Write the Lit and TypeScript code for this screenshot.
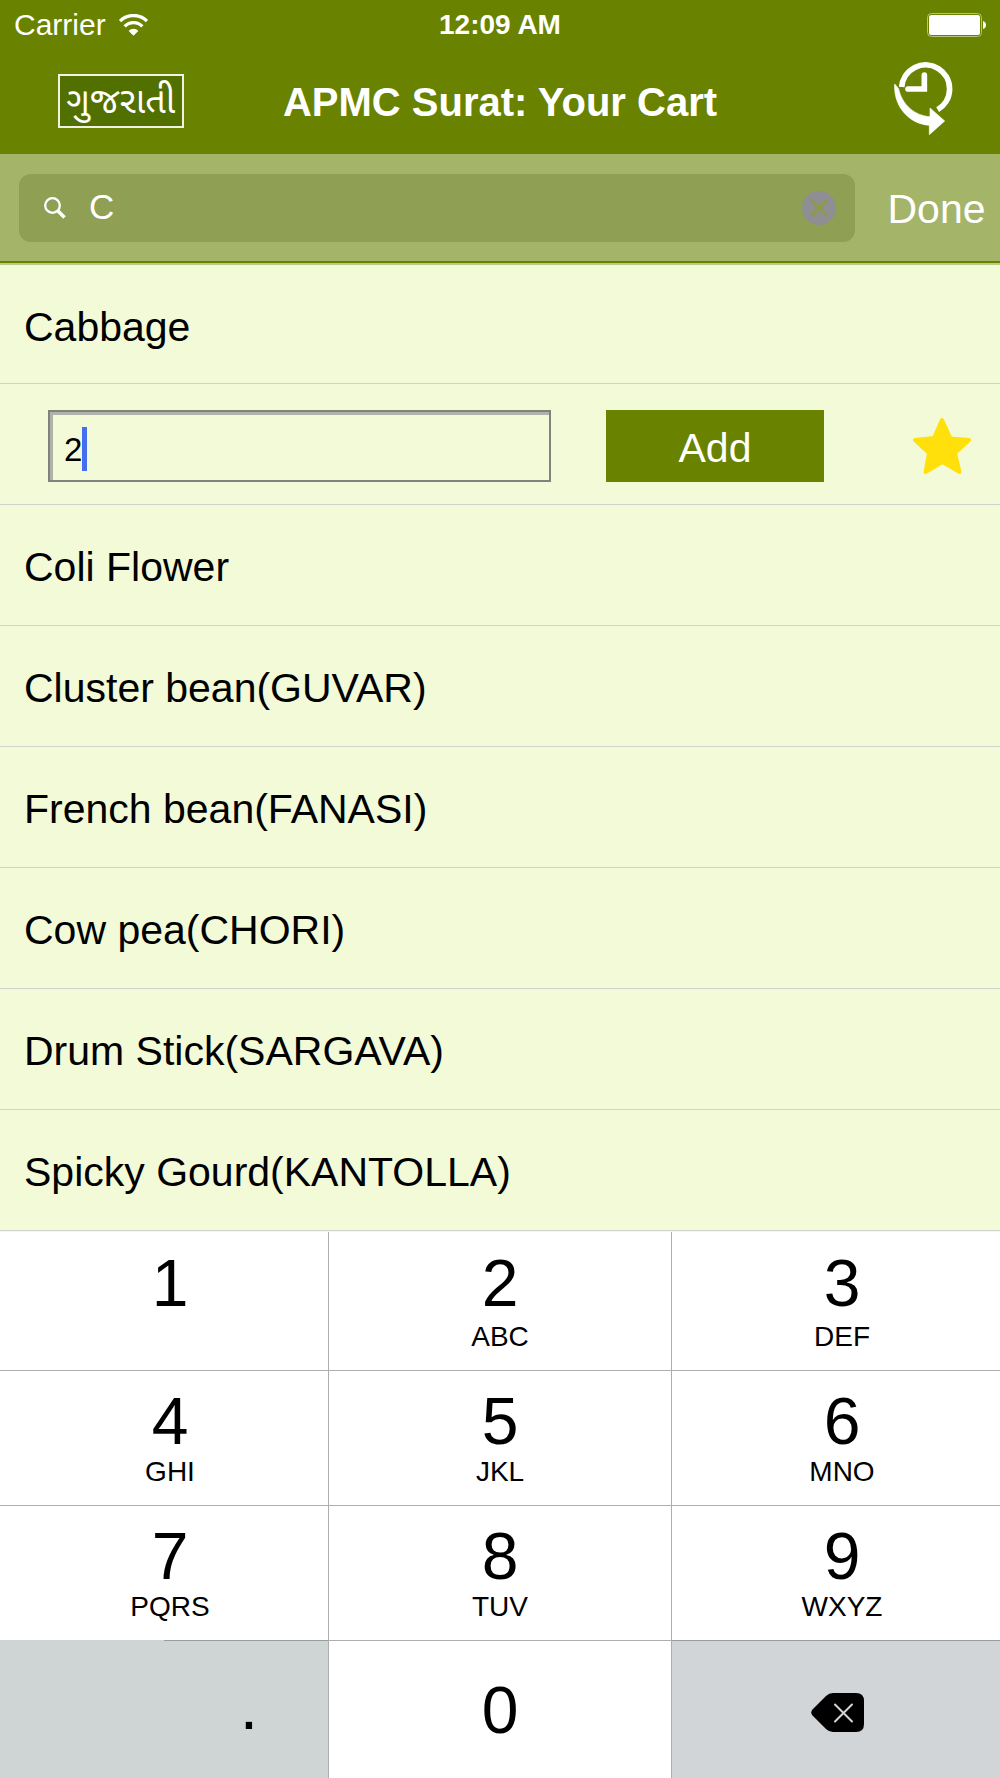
import { LitElement, html, css, svg, nothing } from "lit";
import { customElement, state, property } from "lit/decorators.js";

const wifiIcon = svg`
  <svg class="wifi" viewBox="0 0 87 66" aria-hidden="true">
    <g fill="none" stroke="#fff" stroke-width="10">
      <path d="M3 21 C26 -1 61 -1 84 21" />
      <path d="M17 37 C32 22 55 22 70 37" />
    </g>
    <path d="M29 51 C37 42 50 42 58 51 L43.500 65 Z" fill="#fff" />
  </svg>`;

const batteryIcon = svg`
  <svg class="battery" viewBox="0 0 59 24" aria-hidden="true">
    <rect x="0.500" y="0.500" width="54" height="23" rx="4" fill="none" stroke="#b4c480" />
    <rect x="2" y="2" width="51" height="20" rx="2.500" fill="#fff" />
    <path d="M56 8 Q59 9 59 12 Q59 15 56 16 Z" fill="#fff" />
  </svg>`;

const historyIcon = svg`
  <svg class="history-icon" viewBox="40 22 177 222" aria-hidden="true">
    <path d="M63 97 A72 72 0 1 1 171 165" fill="none" stroke="#fff" stroke-width="17" />
    <path d="M131 61 V103 H82" fill="none" stroke="#fff" stroke-width="17" stroke-linecap="round" />
    <path d="M42 88 C38 150 80 207 146 212 V240 L192 199 L148 160 V186 C105 184 64 152 54 102 Z" fill="#fff" stroke="#fff" stroke-width="2" />
  </svg>`;

const searchIcon = svg`
  <svg class="search-icon" viewBox="0 0 22 22" aria-hidden="true">
    <circle cx="8.500" cy="8.500" r="7.300" fill="none" stroke="#fff" stroke-width="2.300" />
    <path d="M13.500 13.500 L20.500 20.500" stroke="#fff" stroke-width="3.500" />
  </svg>`;

const clearIcon = svg`
  <svg class="clear-icon" viewBox="0 0 34 34" aria-hidden="true">
    <circle cx="17" cy="17" r="17" fill="#8e8e93" />
    <path d="M10.500 10.500 L23.500 23.500 M23.500 10.500 L10.500 23.500" stroke="#8c9a4c" stroke-width="3.400" stroke-linecap="round" />
  </svg>`;

const starIcon = svg`
  <svg class="star-icon" viewBox="0 0 58 56" aria-hidden="true">
    <path
      d="M29 2 L37.500 20.500 L56 22 L42 35 L46.500 54 L29.500 44 L12.500 54 L16 35 L2 22 L21 20 Z"
      fill="#ffe00a" stroke="#ffe00a" stroke-width="4" stroke-linejoin="round" />
  </svg>`;

const deleteIcon = svg`
  <svg class="delete-icon" viewBox="0 0 53 39" aria-hidden="true">
    <path d="M22 0 H45 Q53 0 53 8 V31 Q53 39 45 39 H22 Q18 39 15 36 L1.500 22.500 Q-1 19.500 1.500 16.500 L15 3 Q18 0 22 0 Z" />
    <path d="M24 11.500 L41 28.500 M41 11.500 L24 28.500" stroke="#d1d5d8" stroke-width="2" stroke-linecap="round" />
  </svg>`;

@customElement("key-pad")
class KeyPad extends LitElement {
  static styles = css`
    :host {
      display: block;
      background: #fff;
    }
    .pad {
      display: grid;
      grid-template-columns: 329fr 343fr 328fr;
      grid-template-rows: 138px 135px 135px 138px;
    }
    button {
      font: inherit;
      color: #000;
      margin: 0;
      border: 0;
      background: none;
    }
    .key {
      display: flex;
      flex-direction: column;
      align-items: center;
      justify-content: space-between;
      padding: 17px 0;
      border-right: 1px solid #adafaf;
      border-top: 1px solid #adafaf;
    }
    .top {
      border-top: 0;
      padding-top: 18px;
    }
    .side {
      padding-left: 12px;
    }
    .last {
      border-right: 0;
    }
    .digit {
      font-size: 66px;
      line-height: 66px;
    }
    .letters {
      font-size: 28px;
      line-height: 32px;
    }
    .solo {
      justify-content: center;
    }
    .split {
      display: grid;
      grid-template-columns: 1fr 1fr;
      background: #cfd5d5;
      border-right: 1px solid #adafaf;
    }
    .point {
      grid-column: 2;
      border-top: 1px solid #989d9d;
      font-size: 66px;
      line-height: 66px;
      padding: 0 0 8px 6px;
    }
    .delete {
      display: flex;
      align-items: center;
      justify-content: center;
      background: #d1d5d8;
      border-top: 1px solid #989d9d;
      padding: 5px 0 0 2px;
    }
    .delete-icon {
      display: block;
      width: 53px;
      height: 39px;
    }
  `;

  private keys: [string, string][] = [
    ["1", ""], ["2", "ABC"], ["3", "DEF"],
    ["4", "GHI"], ["5", "JKL"], ["6", "MNO"],
    ["7", "PQRS"], ["8", "TUV"], ["9", "WXYZ"],
  ];

  private press(value: string) {
    this.dispatchEvent(new CustomEvent("key-press", { detail: value }));
  }

  render() {
    return html`
      <div class="pad">
        ${this.keys.map(([digit, letters], i) => {
          const column = i % 3;
          const names = ["key", i < 3 ? "top" : "", column !== 1 ? "side" : "", column === 2 ? "last" : ""];
          return html`
            <button class=${names.filter(Boolean).join(" ")} @click=${() => this.press(digit)}>
              <span class="digit">${digit}</span>
              ${letters ? html`<span class="letters">${letters}</span>` : nothing}
            </button>`;
        })}
        <div class="split">
          <button class="point" @click=${() => this.press(".")}>.</button>
        </div>
        <button class="key solo" @click=${() => this.press("0")}><span class="digit">0</span></button>
        <button class="delete" aria-label="Delete" @click=${() => this.press("delete")}>${deleteIcon}</button>
      </div>`;
  }
}

@customElement("quantity-row")
class QuantityRow extends LitElement {
  @property() value = "";

  static styles = css`
    :host {
      display: flex;
      align-items: stretch;
      padding: 26px 0 22px 48px;
    }
    .field {
      position: relative;
      flex: 1;
      min-width: 0;
      display: flex;
    }
    .amount {
      flex: 1;
      min-width: 0;
      height: 72px;
      box-sizing: border-box;
      margin: 0;
      padding: 8px 14px 0;
      border: 2px solid #7f837c;
      border-radius: 0;
      box-shadow: inset 3px 3px 0 #b0b3ab;
      background: transparent;
      font: inherit;
      font-size: 33px;
      color: #000;
      outline: none;
    }
    .caret {
      position: absolute;
      left: 34px;
      top: 17px;
      width: 5px;
      height: 44px;
      background: #456df0;
    }
    button {
      font: inherit;
      border: 0;
      padding: 0;
    }
    .add {
      width: 218px;
      margin-left: 55px;
      background: #698200;
      color: #fff;
      font-size: 41px;
      line-height: 48px;
      padding-top: 4px;
    }
    .star {
      width: 117px;
      margin-left: 59px;
      background: none;
      display: flex;
      align-items: center;
      justify-content: center;
    }
    .star-icon {
      display: block;
      width: 58px;
      height: 56px;
    }
  `;

  render() {
    return html`
      <div class="field">
        <input class="amount" inputmode="decimal" aria-label="Quantity" .value=${this.value} />
        <span class="caret"></span>
      </div>
      <button class="add">Add</button>
      <button class="star" aria-label="Favourite">${starIcon}</button>`;
  }
}

@customElement("app-root")
class AppRoot extends LitElement {
  @state() private quantity = "2";
  @state() private query = "C";

  private items = [
    "Cabbage",
    "Coli Flower",
    "Cluster bean(GUVAR)",
    "French bean(FANASI)",
    "Cow pea(CHORI)",
    "Drum Stick(SARGAVA)",
    "Spicky Gourd(KANTOLLA)",
  ];

  static styles = css`
    :host {
      display: flex;
      flex-direction: column;
      min-height: 100vh;
      background: #f2fad8;
      font-family: "Liberation Sans", "Noto Sans Gujarati", Arial, sans-serif;
      color: #000;
    }
    .header {
      background: #698200;
      color: #fff;
    }
    .status {
      display: grid;
      grid-template-columns: 1fr auto 1fr;
      align-items: center;
      height: 48px;
      padding: 0 14px;
    }
    .carrier {
      display: flex;
      align-items: center;
      gap: 13px;
      font-size: 30px;
      line-height: 50px;
    }
    .wifi {
      width: 29px;
      height: 22px;
    }
    .time {
      font-size: 28px;
      line-height: 50px;
      font-weight: 700;
    }
    .battery {
      justify-self: end;
      width: 59px;
      height: 24px;
    }
    .nav {
      display: grid;
      grid-template-columns: 1fr auto 1fr;
      align-items: center;
      height: 106px;
      padding: 0 47px;
    }
    button {
      font: inherit;
      color: #fff;
      border: 0;
      padding: 0;
      background: none;
    }
    .language {
      justify-self: start;
      width: 126px;
      height: 54px;
      margin-left: 11px;
      border: 2px solid #f0f3e4;
      background: #527000;
      font-size: 36px;
      line-height: 48px;
      white-space: nowrap;
    }
    .title {
      margin: 0;
      padding-top: 2px;
      font-size: 40px;
      line-height: 48px;
      font-weight: 700;
    }
    .history {
      justify-self: end;
      padding-bottom: 4px;
    }
    .history-icon {
      display: block;
      width: 59px;
      height: 74px;
    }
    .search-bar {
      display: flex;
      align-items: center;
      height: 107px;
      padding-left: 19px;
      background: #a4b468;
      border-bottom: 2px solid #698200;
      box-shadow: 0 2px 0 #bccb85;
      margin-bottom: 2px;
    }
    .search-field {
      flex: 1;
      min-width: 0;
      display: flex;
      align-items: center;
      height: 68px;
      box-sizing: border-box;
      padding: 0 19px 0 25px;
      border-radius: 12px;
      background: #8f9f54;
    }
    .search-icon {
      width: 22px;
      height: 22px;
    }
    .query {
      flex: 1;
      min-width: 0;
      margin: 0;
      padding: 0 0 2px 23px;
      border: 0;
      outline: none;
      background: transparent;
      font: inherit;
      font-size: 35px;
      color: #fff;
    }
    .clear-icon {
      display: block;
      width: 34px;
      height: 34px;
    }
    .done {
      width: 145px;
      padding: 3px 0 0 18px;
      font-size: 41px;
      line-height: 48px;
    }
    .list {
      flex: 1;
      list-style: none;
      margin: 0;
      padding: 0 0 1px;
    }
    .item {
      box-sizing: border-box;
      min-height: 121px;
      border-bottom: 1px solid #cfd3cb;
    }
    .item:first-child {
      min-height: 119px;
    }
    .name {
      padding: 38px 24px 0;
      font-size: 41px;
      line-height: 48px;
    }
  `;

  private onKey(event: CustomEvent<string>) {
    this.quantity = event.detail === "delete" ? this.quantity.slice(0, -1) : this.quantity + event.detail;
  }

  render() {
    return html`
      <header class="header">
        <div class="status">
          <span class="carrier">Carrier ${wifiIcon}</span>
          <span class="time">12:09 AM</span>
          ${batteryIcon}
        </div>
        <div class="nav">
          <button class="language">ગુજરાતી</button>
          <h1 class="title">APMC Surat: Your Cart</h1>
          <button class="history" aria-label="Order history">${historyIcon}</button>
        </div>
      </header>
      <div class="search-bar">
        <div class="search-field">
          ${searchIcon}
          <input class="query" aria-label="Search" .value=${this.query} />
          <button aria-label="Clear" @click=${() => (this.query = "")}>${clearIcon}</button>
        </div>
        <button class="done">Done</button>
      </div>
      <ul class="list">
        ${this.items.map(
          (item, i) => html`
            <li class="item"><div class="name">${item}</div></li>
            ${i === 0
              ? html`<li class="item"><quantity-row .value=${this.quantity}></quantity-row></li>`
              : nothing}`
        )}
      </ul>
      <key-pad @key-press=${this.onKey}></key-pad>`;
  }
}
